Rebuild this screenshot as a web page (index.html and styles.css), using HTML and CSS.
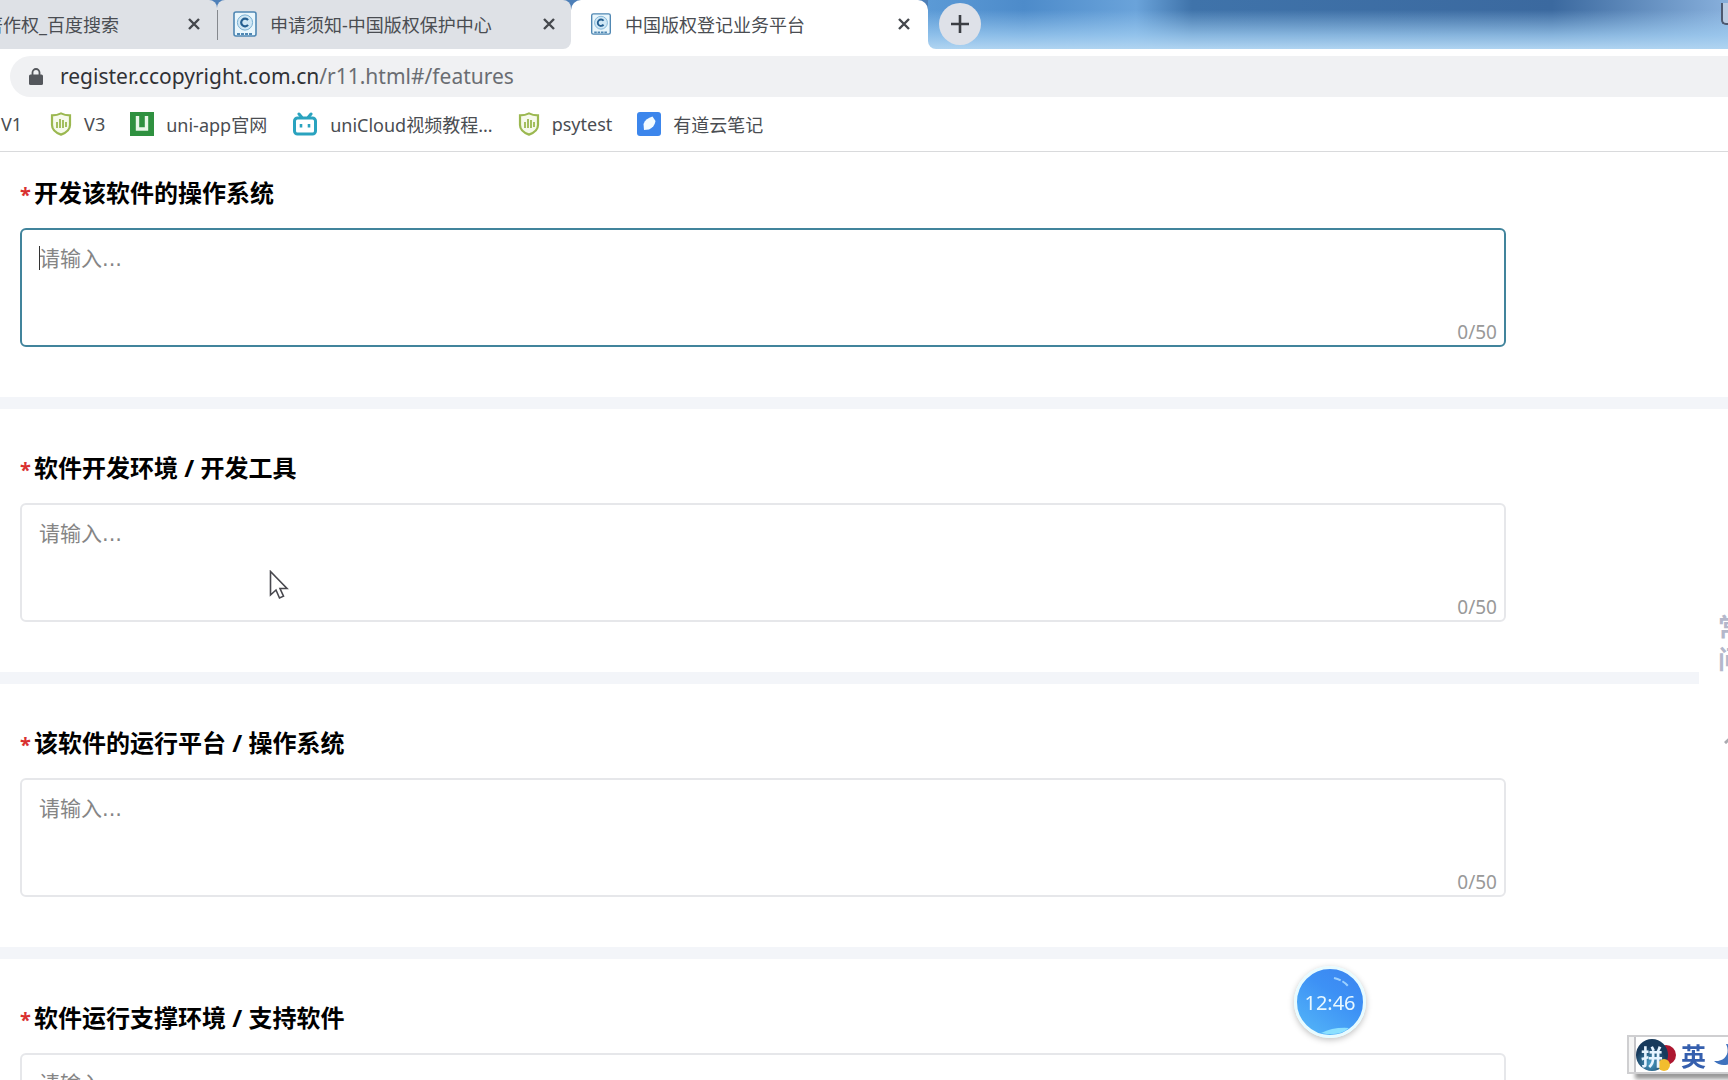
FILE: index.html
```html
<!DOCTYPE html>
<html lang="zh-CN">
<head>
<meta charset="utf-8">
<title>中国版权登记业务平台</title>
<link rel="stylesheet" href="styles.css">
</head>
<body>
<svg class="defs" aria-hidden="true">
  <symbol id="close" viewBox="0 0 14 14"><path d="M2 2l10 10M12 2L2 12" stroke="#45484d" stroke-width="2.4" fill="none"/></symbol>
  <symbol id="copyright" viewBox="0 0 24 26">
    <rect x="1" y="1" width="22" height="24" rx="2" fill="#e9f6fc" stroke="#4f87b3" stroke-width="1.6"/>
    <circle cx="12" cy="11.5" r="7.6" fill="#cfe7f5" stroke="#78aed2"/>
    <path d="M15 9.2a3.8 3.8 0 1 0 0 4.6" fill="none" stroke="#245f91" stroke-width="2.2"/>
    <path d="M4 23h16" stroke="#4f87b3" stroke-width="2" stroke-dasharray="3 1"/>
  </symbol>
  <symbol id="shield" viewBox="0 0 22 24">
    <path d="M11 1.4C8 3 5 3.4 2 3.4V13c0 5 4 7.800 9 9.600 5-1.800 9-4.600 9-9.600V3.400c-3 0-6-.4-9-2z" fill="#f6faeb" stroke="#9bb850" stroke-width="2.200"/>
    <path d="M7 10v6M10 7v9M13 8v8M16 10v5" stroke="#9bb850" stroke-width="1.800"/>
  </symbol>
</svg>
<div class="browser">
  <header class="strip">
    <div class="tab tab-first"><span class="name">著作权_百度搜索</span><button class="icon-button" aria-label="关闭"><svg width="14" height="14"><use href="#close"/></svg></button></div>
    <div class="tab tab-second"><svg width="24" height="26"><use href="#copyright"/></svg><span class="name">申请须知-中国版权保护中心</span><button class="icon-button" aria-label="关闭"><svg width="14" height="14"><use href="#close"/></svg></button></div>
    <div class="tab tab-active"><svg width="22" height="22"><use href="#copyright"/></svg><span class="name">中国版权登记业务平台</span><button class="icon-button" aria-label="关闭"><svg width="14" height="14"><use href="#close"/></svg></button></div>
    <div class="glass">
      <button class="new-tab" aria-label="新标签页"><svg width="18" height="18" viewBox="0 0 18 18"><path d="M9 0v18M0 9h18" stroke="#3b3e43" stroke-width="2.600"/></svg></button>
      <span class="window-control"></span>
    </div>
  </header>
  <div class="toolbar">
    <div class="address">
      <svg width="14" height="18" viewBox="0 0 14 18"><rect x="0" y="6.500" width="14" height="10.500" rx="1.500" fill="#54575c"/><path d="M3.500 7V4.500a3.500 3.500 0 0 1 7 0V7" fill="none" stroke="#54575c" stroke-width="1.800"/></svg>
      <span class="url">register.ccopyright.com.cn<span class="path">/r11.html#/features</span></span>
    </div>
  </div>
  <nav class="bookmarks">
    <a class="mark-v1" href="#">V1</a>
    <a href="#"><svg width="22" height="24"><use href="#shield"/></svg>V3</a>
    <a href="#"><svg width="24" height="24" viewBox="0 0 24 24"><path fill="#2f9140" d="M0 0h24v24H0z"/><path d="M7.500 4v13h9V4" fill="none" stroke="#e9f7e9" stroke-width="3.400"/></svg>uni-app官网</a>
    <a href="#"><svg width="26" height="24" viewBox="0 0 26 24"><g fill="none" stroke="#2aa3bf" stroke-width="3" stroke-linecap="round"><rect x="2.500" y="6" width="21" height="16" rx="3"/><path d="M7 2l2.500 3M19 2l-2.500 3"/></g><path d="M9 12v3.500M17 12v3.500" stroke="#2aa3bf" stroke-width="2.600"/></svg>uniCloud视频教程...</a>
    <a href="#"><svg width="22" height="24"><use href="#shield"/></svg>psytest</a>
    <a href="#"><svg width="24" height="24" viewBox="0 0 24 24"><rect width="24" height="24" rx="3" fill="#3c86ec"/><path d="M7 18l-.5-6C8 8 11 6 15.500 4.500L18.500 9c-.5 4-3 7-6.500 8.500z" fill="#f2fbff"/></svg>有道云笔记</a>
  </nav>
  <main class="form">
    <section class="field focused">
      <label for="dev-os"><span class="star">*</span>开发该软件的操作系统</label>
      <div class="box"><textarea id="dev-os" placeholder="请输入..."></textarea><span class="caret"></span><span class="count">0/50</span></div>
    </section>
    <section class="field">
      <label for="dev-tools"><span class="star">*</span>软件开发环境 / 开发工具</label>
      <div class="box"><textarea id="dev-tools" placeholder="请输入..."></textarea><span class="count">0/50</span></div>
    </section>
    <section class="field">
      <label for="platform"><span class="star">*</span>该软件的运行平台 / 操作系统</label>
      <div class="box"><textarea id="platform" placeholder="请输入..."></textarea><span class="count">0/50</span></div>
    </section>
    <section class="field">
      <label for="support"><span class="star">*</span>软件运行支撑环境 / 支持软件</label>
      <div class="box"><textarea id="support" placeholder="请输入..."></textarea><span class="count">0/50</span></div>
    </section>
  </main>
</div>
<aside class="side"><a href="#">常见<br>问题</a><svg width="22" height="12" viewBox="0 0 22 12"><path d="M1 11L11 2l10 9" fill="none" stroke="#aaaab0" stroke-width="3"/></svg></aside>
<svg class="pointer" width="20" height="30" viewBox="0 0 20 30"><path d="M1.500 1.500v23.500l5.500-5 3.500 8 4-1.800-3.500-7.700h7z" fill="#fff" stroke="#48484e" stroke-width="1.600"/></svg>
<div class="clock"><svg width="66" height="66" viewBox="0 0 66 66"><path d="M37 9q9 2 14 8" fill="none" stroke="#9bd0ff" stroke-width="2" stroke-dasharray="7 2"/><path d="M24 64q12-6 28-5-10 9-28 5z" fill="#8be0ff"/></svg><time>12:46</time></div>
<div class="ime">
  <span class="grip"></span>
  <span class="badge"><svg width="40" height="34" viewBox="0 0 40 34"><defs><radialGradient id="orb" cx="45%" cy="75%"><stop offset="0" stop-color="#4aa0c8"/><stop offset="1" stop-color="#173a5c"/></radialGradient></defs><circle cx="30" cy="17" r="10" fill="#ad1730"/><circle cx="16" cy="17" r="16" fill="url(#orb)"/><circle cx="28" cy="27" r="6" fill="#f2bd2e"/></svg><span class="glyph">拼</span></span>
  <span class="mode">英</span>
  <svg class="moon" width="24" height="26" viewBox="0 0 24 26"><path d="M13 2c5 10-2 18-12 17 8 8 22 4 22-9 0-4-5-8-10-8z" fill="#3f72bd"/></svg>
</div>
</body>
</html>
```

FILE: styles.css
```css
* { box-sizing: border-box; }
body {
  margin: 0;
  overflow: hidden;
  background: #fff;
  color: #000;
  font-family: "Noto Sans", "Noto Sans CJK SC", sans-serif;
}
button { border: 0; padding: 0; background: none; }
a { color: inherit; text-decoration: none; }
svg { display: block; flex: none; }
.defs { position: absolute; width: 0; height: 0; }
.browser { display: flex; flex-direction: column; height: 100vh; }

/* tab strip */
.strip { display: flex; flex: none; height: 49px; background: linear-gradient(#4d7fb8 12px, #fff 12px); }
.tab {
  display: flex;
  align-items: center;
  flex: none;
  padding-bottom: 2px;
  background: #dee1e6;
  color: #4a4d52;
  font-size: 18px;
  white-space: nowrap;
}
.tab .name { flex: 1; }
.tab-first { width: 217px; padding-right: 16px; border-radius: 0 8px 0 0; }
.tab-first .name { display: flex; justify-content: flex-end; flex: none; width: 119px; margin-right: auto; }
.tab-second { position: relative; width: 354px; gap: 13px; padding-left: 16px; padding-right: 15px; border-radius: 8px 8px 8px 0; }
.tab-second::before { content: ""; position: absolute; left: 0; top: 10px; height: 30px; border-left: 1px solid #85888d; }
.tab-active { width: 357px; gap: 13px; padding-left: 19px; padding-right: 17px; background: #fff; border-radius: 10px 10px 0 0; }
.icon-button { width: 14px; height: 14px; }
.glass {
  display: flex;
  flex: 1;
  justify-content: space-between;
  padding: 3px 0 0 11px;
  border-bottom-left-radius: 8px;
  background:
    linear-gradient(to bottom, transparent 20%, rgba(160, 205, 241, .75) 72%, #b0d4f1 100%),
    linear-gradient(to right, #5b9ad6, #4d8bca 12%, #6aa3da 26%, #3f73aa 33%, #3b699f 78%, #88b0dc 100%);
}
.new-tab { display: grid; place-items: center; width: 42px; height: 42px; border-radius: 50%; background: #dee1e8; }
.window-control { width: 7px; height: 22px; border: 1px solid #4d5970; border-width: 0 0 2px 2px; border-radius: 0 0 0 5px; background: #b9cbe2; }

/* address and bookmarks */
.toolbar { flex: none; padding: 7px 0 0 10px; }
.address {
  display: flex;
  align-items: center;
  gap: 17px;
  height: 41px;
  padding-left: 19px;
  border-radius: 21px 0 0 21px;
  background: #f0f1f3;
}
.url { padding-bottom: 2px; color: #303236; font-size: 21px; line-height: 38px; }
.path { color: #6a6d72; }
.bookmarks {
  display: flex;
  align-items: center;
  flex: none;
  gap: 25px;
  height: 55px;
  border-bottom: 1px solid #d9dadc;
  color: #4a4d52;
  font-size: 18px;
  white-space: nowrap;
}
.bookmarks a { display: flex; align-items: center; gap: 12px; }
.bookmarks .mark-v1 { padding: 0 3px 0 1px; }

/* form */
.form { flex: 1; min-height: 0; overflow: hidden; }
.field { padding: 39px 0 50px 20px; border-bottom: 12px solid #f3f5f9; }
.field:first-child { padding-top: 21px; }
.field label {
  display: flex;
  align-items: center;
  gap: 4px;
  height: 36px;
  margin-bottom: 19px;
  font-size: 24px;
  font-weight: 700;
  white-space: pre;
}
.star { width: 10px; padding-top: 6px; color: #d93030; font-size: 20px; }
.box { position: relative; width: 87%; height: 119px; }
.box textarea {
  display: block;
  width: 100%;
  height: 100%;
  padding: 14px 17px;
  resize: none;
  outline: 0;
  border: 2px solid #e6e7ea;
  border-radius: 6px;
  background: #fff;
  font: 21px/30px "DejaVu Sans", "Noto Sans CJK SC", sans-serif;
}
.box textarea::placeholder { color: #858585; }
.focused textarea { border-color: #41849c; }
.caret { position: absolute; left: 19px; top: 18px; height: 24px; border-left: 1px solid #333; }
.count { position: absolute; right: 9px; bottom: 3px; color: #999; font-size: 19px; line-height: 24px; }

/* floating items */
.side {
  position: fixed;
  right: 0;
  top: 560px;
  width: 29px;
  height: 220px;
  padding: 50px 0 0 19px;
  overflow: hidden;
  background: #fff;
}
.side a { display: block; color: #b4b8cb; font: 700 26px/32px "Noto Sans CJK SC", sans-serif; white-space: nowrap; }
.side svg { margin: 58px 0 0 6px; }
.pointer { position: fixed; left: 269px; top: 570px; }
.clock {
  position: fixed;
  left: 1294px;
  top: 966px;
  display: grid;
  place-items: center;
  width: 72px;
  height: 72px;
  border: 3px solid #e8fbff;
  border-radius: 50%;
  background: linear-gradient(35deg, #55b8f8, #3d91f5 60%, #3b83ef);
  box-shadow: 0 2px 6px rgba(0, 0, 0, .25);
}
.clock > * { grid-area: 1 / 1; }
.clock time { color: #e8f8ff; font-size: 20px; }
.ime {
  position: fixed;
  right: 0;
  bottom: 6px;
  display: flex;
  align-items: center;
  width: 101px;
  height: 39px;
  overflow: hidden;
  border: 2px solid #cfcfd1;
  border-right: 0;
  background: #fff;
  box-shadow: 8px 5px 4px rgba(0, 0, 0, .4);
}
.grip { flex: none; width: 7px; height: 100%; border-right: 2px solid #c4c4c8; background: #f5f5f5; }
.badge { display: grid; flex: none; align-items: center; width: 40px; }
.badge > * { grid-area: 1 / 1; }
.glyph { padding-left: 5px; color: #e6f4ff; font: 700 22px/34px "Noto Sans CJK SC", sans-serif; }
.mode { margin-left: 5px; color: #355fae; font: 700 25px/34px "Noto Sans CJK SC", sans-serif; }
.moon { margin-left: 7px; }
```
